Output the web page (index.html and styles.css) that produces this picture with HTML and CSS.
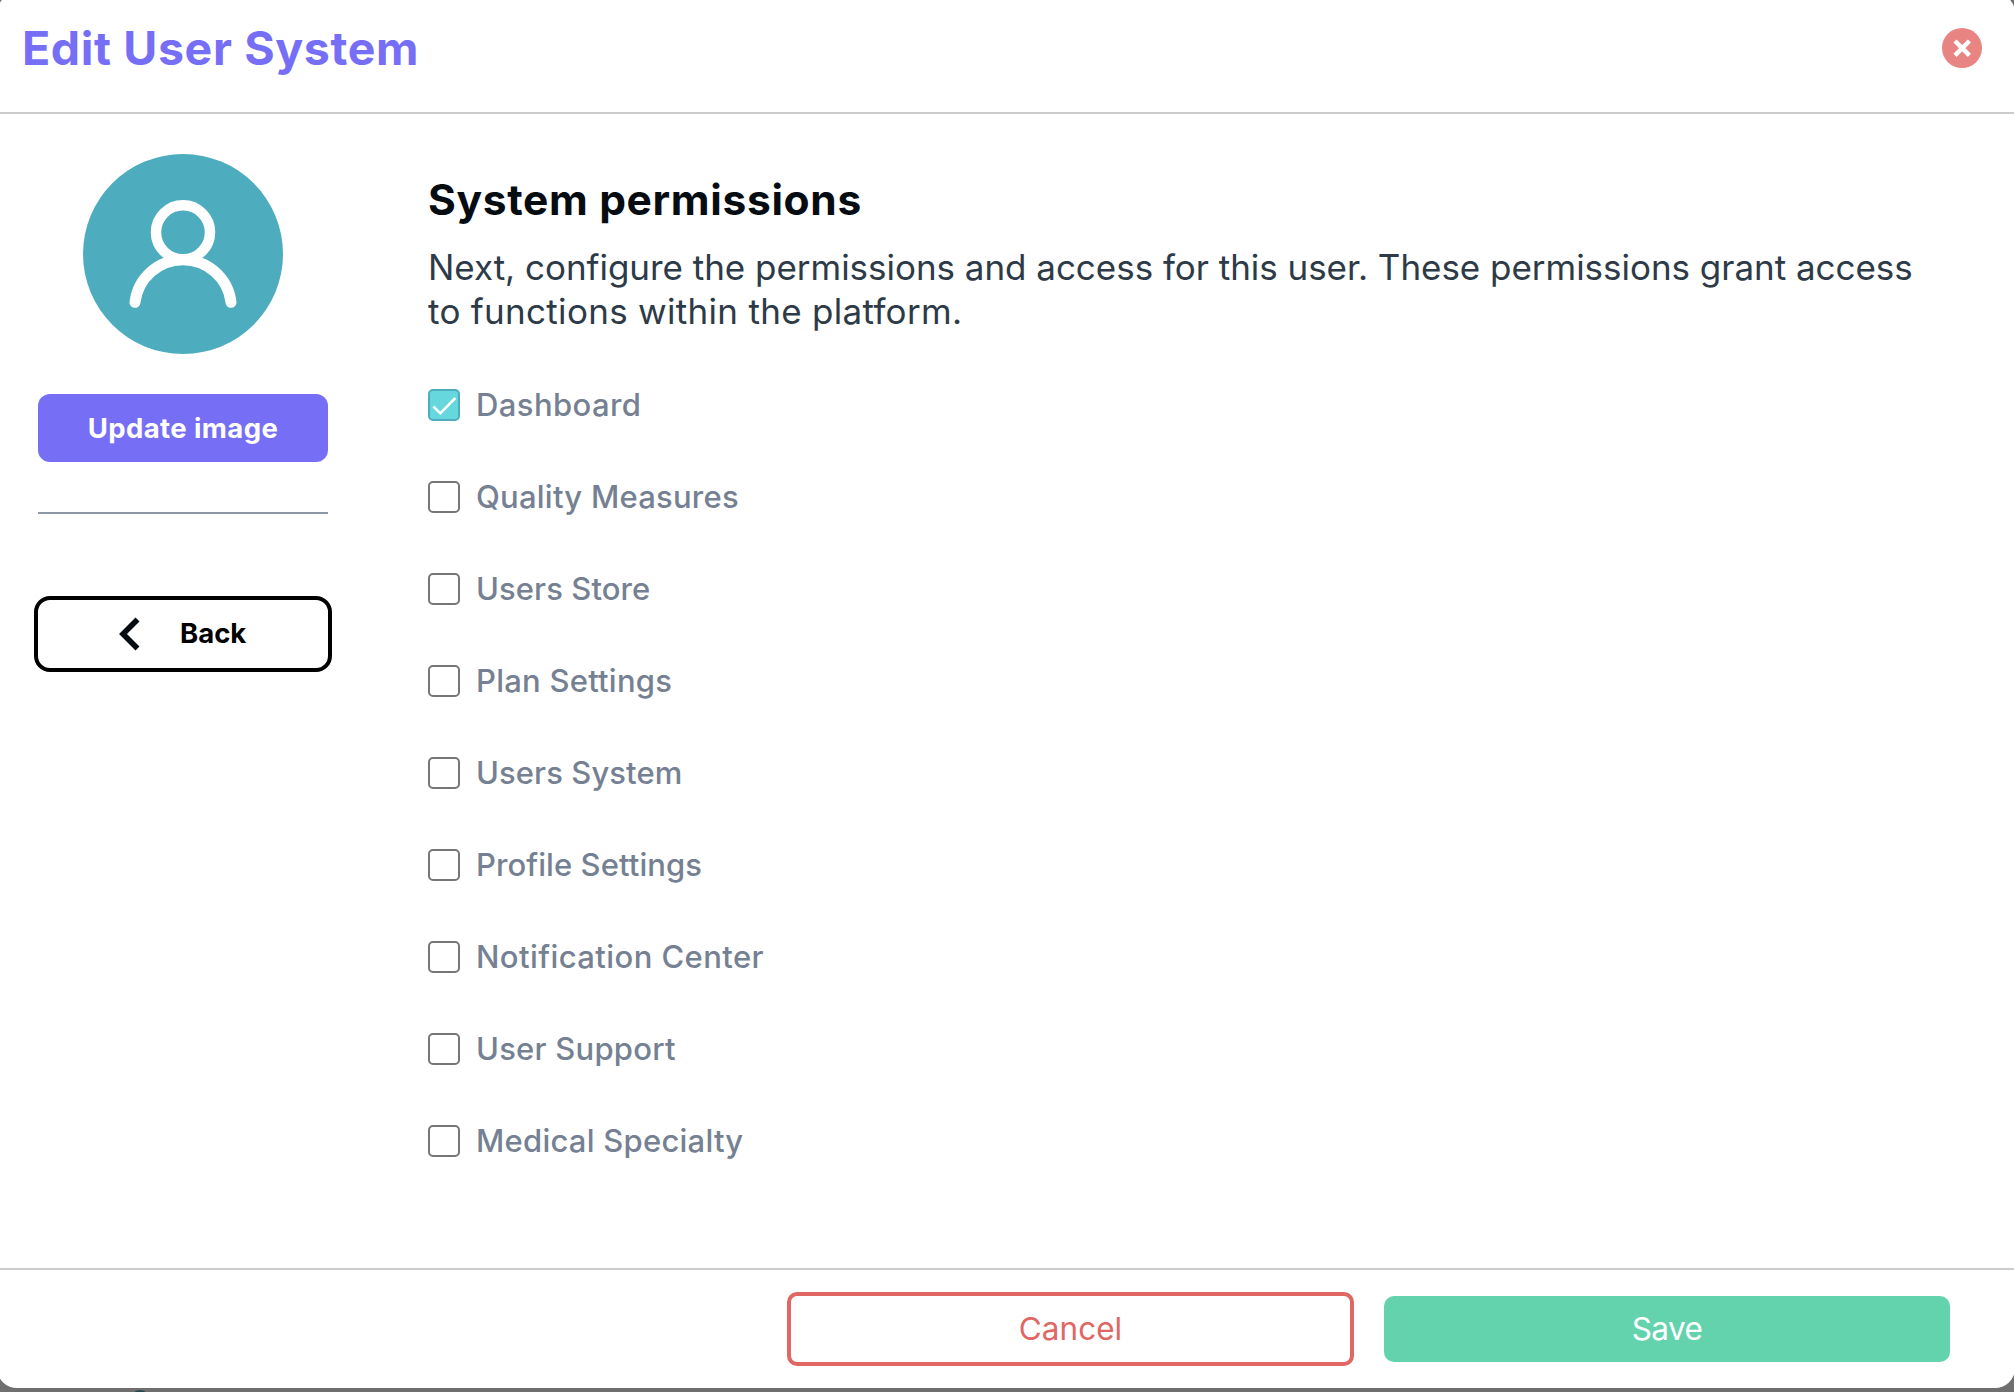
FILE: index.html
```html
<!DOCTYPE html>
<html lang="en">
<head>
<meta charset="utf-8">
<title>Edit User System</title>
<link rel="stylesheet" href="styles.css">
</head>
<body>
<div class="backdrop-dot"></div>
<div class="modal" role="dialog" aria-labelledby="title">
  <header class="header">
    <h1 class="title" id="title">Edit User System</h1>
    <button class="close" aria-label="Close">
      <svg width="40" height="40" viewBox="0 0 40 40"><circle cx="20" cy="20" r="20" fill="#e88583"/><path d="M13 13 27.400 27.400M27.400 13 13 27.400" stroke="#fff" stroke-width="4.400" fill="none"/></svg>
    </button>
  </header>
  <div class="body">
    <aside class="sidebar">
      <svg class="avatar" width="200" height="200" viewBox="0 0 200 200" fill="none">
        <circle cx="100" cy="100" r="100" fill="#4dacbd"/>
        <circle cx="100" cy="78.3" r="27" stroke="#fff" stroke-width="10.5"/>
        <path d="M52 148.3A48.350 48.350 0 0 1 148 148.300" stroke="#fff" stroke-width="11" stroke-linecap="round"/>
      </svg>
      <button class="update">Update image</button>
      <hr class="divider">
      <button class="back">
        <svg width="22" height="34" viewBox="0 0 22 34" fill="none"><path d="M18.500 2.500 4 17 18.500 31.500" stroke="#050c12" stroke-width="5.600"/></svg>
        <span class="back-label">Back</span>
      </button>
    </aside>
    <main class="content">
      <h2 class="heading">System permissions</h2>
      <p class="intro"><span class="intro-first">Next, configure the permissions and access for this user. These permissions grant access</span> <span class="intro-second">to functions within the platform.</span></p>
      <ul class="permissions">
        <li class="permission"><span class="box checked"><svg width="28" height="28" viewBox="0 0 28 28" fill="none"><path d="M3.400 15.500 10.300 22.300 25.300 7" stroke="#fff" stroke-width="2.500"/></svg></span><span class="label wide">Dashboard</span></li>
        <li class="permission"><span class="box"></span><span class="label">Quality Measures</span></li>
        <li class="permission"><span class="box"></span><span class="label tight">Users Store</span></li>
        <li class="permission"><span class="box"></span><span class="label">Plan Settings</span></li>
        <li class="permission"><span class="box"></span><span class="label tight">Users System</span></li>
        <li class="permission"><span class="box"></span><span class="label tight">Profile Settings</span></li>
        <li class="permission"><span class="box"></span><span class="label wide">Notification Center</span></li>
        <li class="permission"><span class="box"></span><span class="label">User Support</span></li>
        <li class="permission"><span class="box"></span><span class="label">Medical Specialty</span></li>
      </ul>
    </main>
  </div>
  <footer class="footer">
    <button class="action cancel">Cancel</button>
    <button class="action save">Save</button>
  </footer>
</div>
</body>
</html>
```
FILE: styles.css
```css
* { box-sizing: border-box; }
body {
  margin: 0;
  height: 1392px;
  overflow: hidden;
  background: #6f6f70;
  font-family: Inter, "Liberation Sans", sans-serif;
}
button { font-family: inherit; border: 0; padding: 0; background: none; }
.backdrop-dot {
  position: absolute;
  left: 130px;
  top: 1390px;
  width: 20px;
  height: 20px;
  border-radius: 50%;
  background: #24494c;
}
/* The dialog reaches slightly past the viewport on the left, right and top. */
.modal {
  margin: -7px -1px 0 -3px;
  height: 1395px;
  padding: 7px 1px 0 3px;
  border-radius: 20px;
  background: #fff;
  overflow: hidden;
  display: flex;
  flex-direction: column;
}
.header {
  height: 114px;
  border-bottom: 2px solid #ccc;
  padding: 18px 32px 0 22px;
  display: flex;
  justify-content: space-between;
  align-items: flex-start;
}
.title {
  margin: 0;
  font-size: 46.5px;
  line-height: 60px;
  font-weight: 700;
  letter-spacing: 0.62px;
  color: #776ef6;
}
.close { margin-top: 10px; height: 40px; }
.close svg, .avatar, .box svg, .back svg { display: block; }
.body { flex: 1; display: flex; }
.sidebar {
  width: 366px;
  padding: 40px 0 0 34px;
  display: flex;
  flex-direction: column;
  align-items: flex-start;
}
.avatar { margin-left: 49px; }
.update {
  width: 290px;
  height: 68px;
  margin: 40px 0 0 4px;
  border-radius: 12px;
  background: #776ef6;
  color: #fff;
  font-size: 27.5px;
  font-weight: 700;
  letter-spacing: 0.4px;
}
.divider {
  width: 290px;
  height: 2px;
  margin: 50px 0 0 4px;
  border: 0;
  background: #8a98a8;
}
.back {
  width: 298px;
  height: 76px;
  margin-top: 82px;
  border: 4px solid #000;
  border-radius: 16px;
  padding-left: 81px;
  display: flex;
  align-items: center;
  gap: 39px;
  color: #000;
  font-size: 27.5px;
  font-weight: 700;
}
.back-label { padding-bottom: 2px; }
.content { flex: 1; padding: 56px 0 0 62px; }
.heading {
  margin: 0 0 15px;
  font-size: 42.5px;
  line-height: 60px;
  font-weight: 700;
  letter-spacing: 0.66px;
  color: #050c12;
}
.intro {
  margin: 0 0 56px;
  font-size: 35px;
  line-height: 44px;
  color: #2d3a47;
}
.intro-first, .intro-second { display: block; white-space: nowrap; }
.intro-first { letter-spacing: -0.03px; }
.intro-second { letter-spacing: 0.3px; }
.permissions {
  list-style: none;
  margin: 0;
  padding: 0;
  display: grid;
  gap: 60px;
}
.permission {
  height: 32px;
  display: flex;
  align-items: center;
  gap: 16px;
  font-size: 31px;
  font-weight: 500;
  letter-spacing: 0.24px;
  color: #758192;
}
.label { line-height: 38px; }
.wide { letter-spacing: 0.42px; }
.tight { letter-spacing: 0.08px; }
.box {
  width: 32px;
  height: 32px;
  border: 2px solid #767676;
  border-radius: 5px;
}
.checked { border-color: #4dacbd; background: #65d7dd; }
.footer {
  height: 120px;
  border-top: 2px solid #ccc;
  padding: 22px 64px 22px 0;
  display: flex;
  justify-content: flex-end;
  align-items: center;
  gap: 30px;
}
.action { width: 566px; border-radius: 10px; font-size: 31.5px; line-height: 40px; }
.cancel { width: 567px; height: 74px; border: 4px solid #e06763; color: #e06763; }
.save { height: 66px; background: #63d3ae; color: #fff; letter-spacing: -0.6px; }
```
